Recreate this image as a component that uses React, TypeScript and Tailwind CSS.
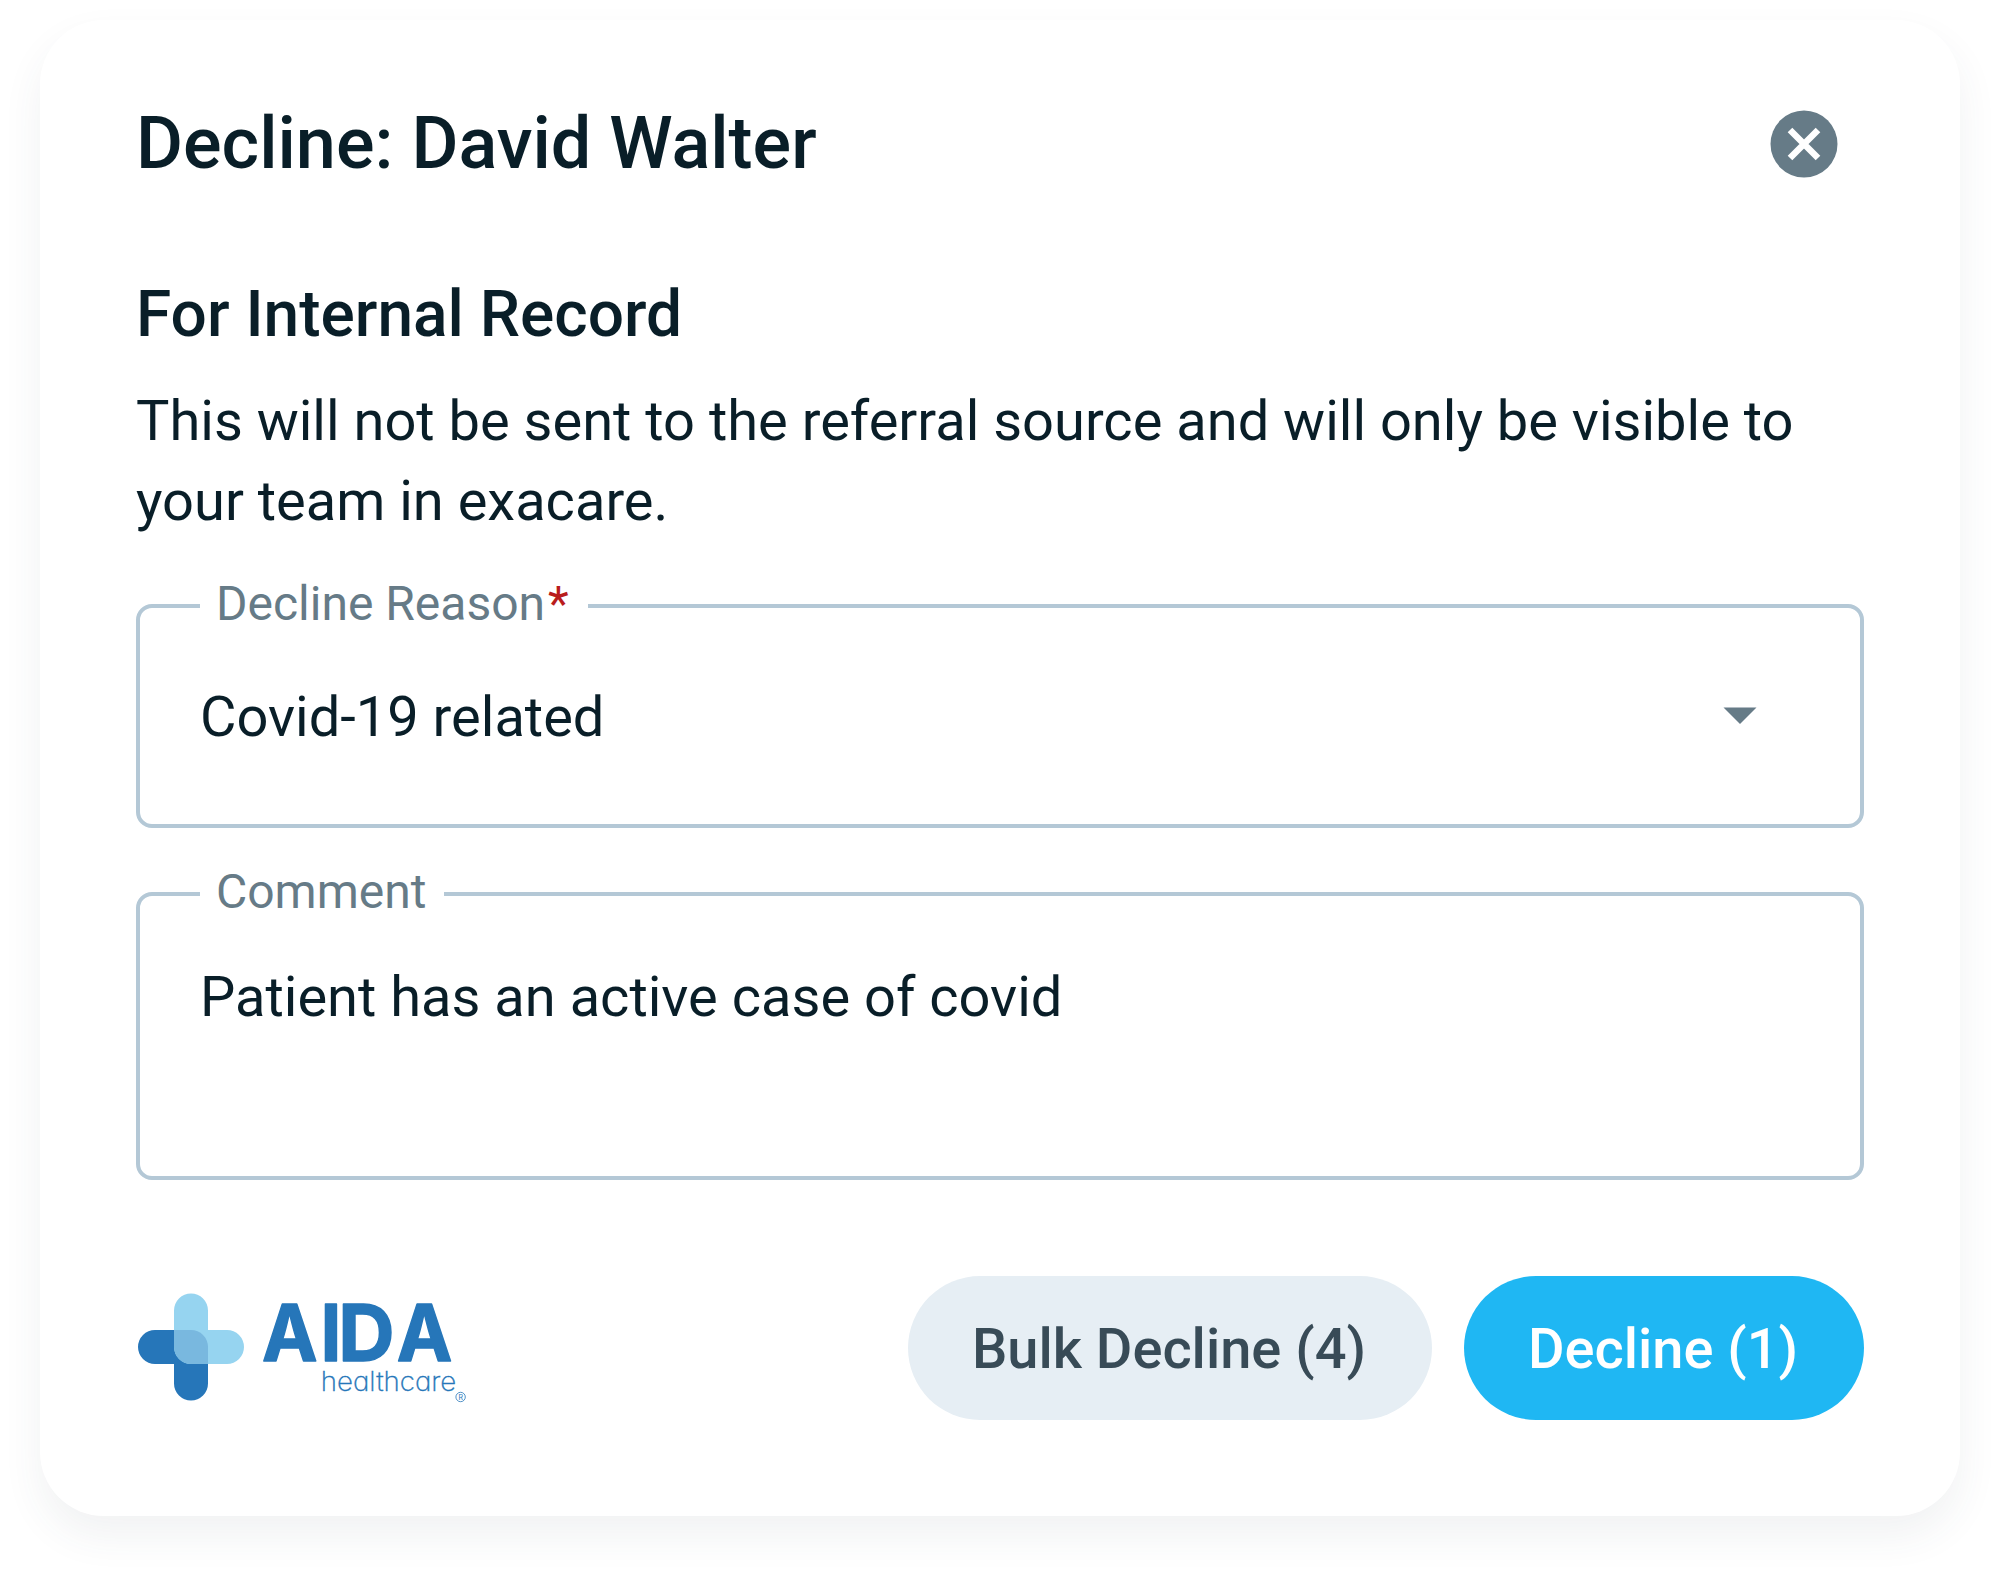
import React from 'react';

const AidaLogo = () => (
  <svg className="h-[112px] w-[332px] overflow-visible" viewBox="136 1292 332 112" role="img" aria-label="AIDA healthcare">
    {/* Cross */}
    <path d="M155 1330h36a17 17 0 0 1 17 17v36.5a17 17 0 0 1-34 0V1364h-19a17 17 0 0 1 0-34z" fill="#2676b9" />
    <path d="M174 1310.5a17 17 0 0 1 34 0V1330h19a17 17 0 0 1 0 34h-36a17 17 0 0 1-17-17z" fill="#96d4f0" />
    <path d="M174 1330h17a17 17 0 0 1 17 17v17h-17a17 17 0 0 1-17-17z" fill="#79b8df" />

    {/* Wordmark */}
    <g fill="#2676b9" stroke="#2676b9" fontFamily="Inter, sans-serif">
      <g fontWeight="700" fontSize="78" strokeWidth="1.4" strokeLinejoin="round">
        <text transform="translate(262 1361.4) scale(0.955 1)" x="0 61.2">AI</text>
        <text x="338.2" y="1361.4">D</text>
        <text transform="translate(396.8 1361.4) scale(0.955 1)">A</text>
      </g>
      <text x="320.8" y="1390.7" textLength="135.5" lengthAdjust="spacingAndGlyphs" fontWeight="200" fontSize="26.5" strokeWidth="0.35" className="[font-feature-settings:'cv11']">healthcare</text>
      <circle cx="460.6" cy="1397" r="4.7" fill="none" strokeWidth="0.8" />
      <text x="460.7" y="1399.6" textAnchor="middle" fontSize="7" stroke="none">R</text>
    </g>
  </svg>
);

interface FieldProps {
  label: string;
  required?: boolean;
  className: string;
  legendClassName: string;
  children: React.ReactNode;
}

const Field = ({ label, required, className, legendClassName, children }: FieldProps) => (
  <div className={`relative rounded-2xl border-4 border-[#b4c8d6] px-[60px] ${className}`}>
    <label className={`absolute -top-8 left-[60px] h-[56px] whitespace-nowrap bg-white px-4 text-[48px] leading-[56px] text-[#667b87] ${legendClassName}`}>
      {label}
      {required && <span className="ml-[3px] text-[#b91c1c]">*</span>}
    </label>
    {children}
  </div>
);

export default function App() {
  return (
    <div className="h-[1576px] w-[2000px] bg-white px-10 pt-5 font-['Roboto',sans-serif] text-[#091e28]">
      <div className="h-[1496px] w-[1920px] rounded-[64px] bg-white px-24 pt-20 shadow-[0_20px_40px_rgba(56,75,87,0.07)]">
        {/* Header */}
        <div className="flex h-[88px] items-center justify-between pr-[26px]">
          <h1 className="text-[72px] font-medium leading-[88px]">Decline: David Walter</h1>
          <button aria-label="Close">
            <svg className="h-[68px] w-[68px]" viewBox="0 0 68 68">
              <circle cx="34" cy="34" r="33.5" fill="#667b87" />
              <path d="M20 20l28 28M48 20L20 48" stroke="#fff" strokeWidth="6.5" />
            </svg>
          </button>
        </div>

        <h2 className="mt-[87px] text-[64px] font-medium leading-[80px]">For Internal Record</h2>
        <p className="mt-[26px] text-[56px] leading-[80px]">
          This will not be sent to the referral source and will only be visible to your team in exacare.
        </p>

        {/* Form */}
        <Field label="Decline Reason" required className="mt-[63px] flex h-[224px] items-start justify-between" legendClassName="w-[388px]">
          <span className="mt-[69px] text-[56px] leading-[80px]">Covid-19 related</span>
          <svg className="mr-[43px] mt-[99px] h-[17px] w-[34px]" viewBox="0 0 34 17" fill="#667b87">
            <path d="M0.5 0.5h33L17 17z" />
          </svg>
        </Field>
        <Field label="Comment" className="mt-16 h-[288px] pt-[61px]" legendClassName="w-[244px]">
          <p className="text-[56px] leading-[80px]">Patient has an active case of covid</p>
        </Field>

        {/* Footer */}
        <div className="mt-24 flex h-[144px] items-center justify-between">
          <AidaLogo />
          <div className="flex gap-8">
            <button className="h-[144px] w-[524px] rounded-full bg-[#e6eef4] pr-0.5 pt-0.5 text-[56px] font-medium text-[#384b57]">
              Bulk Decline (4)
            </button>
            <button className="h-[144px] w-[400px] rounded-full bg-[#1fb7f3] pr-0.5 pt-0.5 text-[56px] font-medium text-white">
              Decline (1)
            </button>
          </div>
        </div>
      </div>
    </div>
  );
}
